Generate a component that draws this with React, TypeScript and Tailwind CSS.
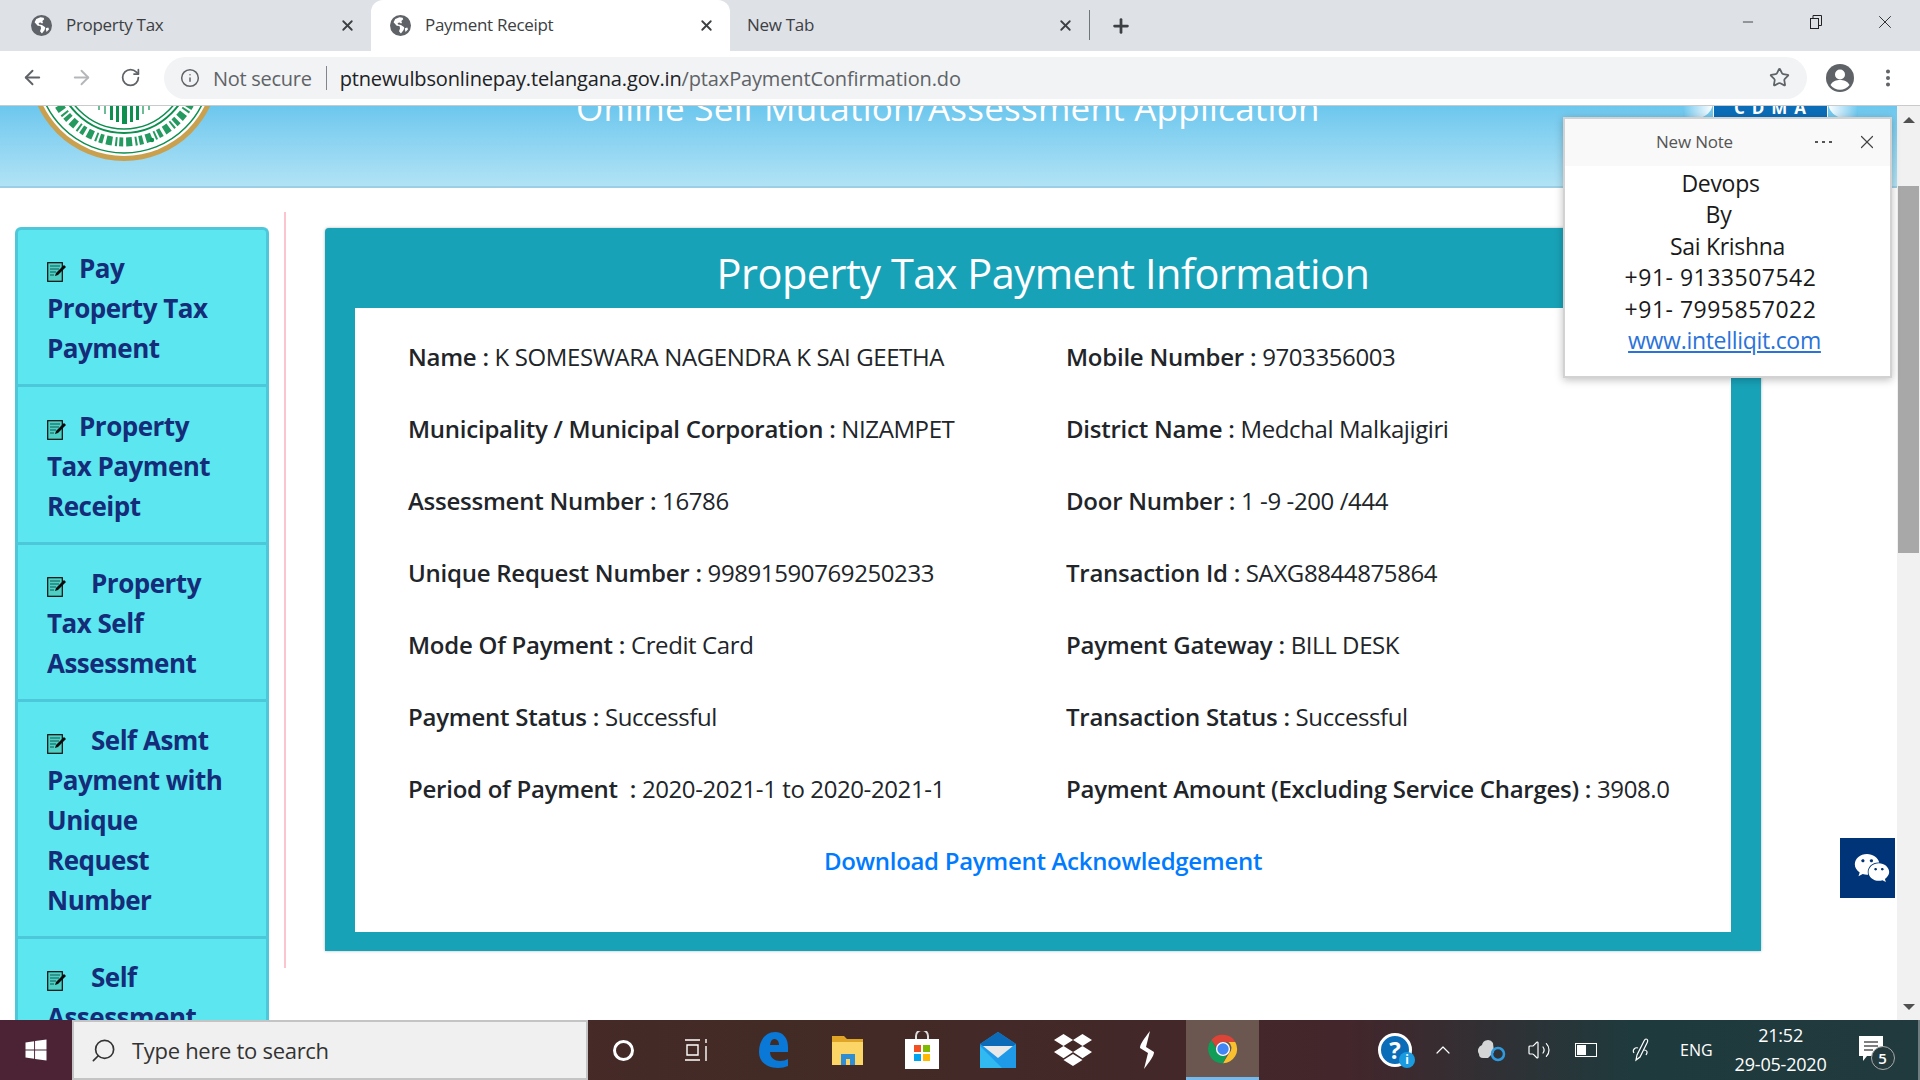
import { ArrowLeft, ArrowRight, RotateCw, Info, Star, MoreVertical, Plus, X, Minus, Search, ChevronUp, Volume2 } from "lucide-react"
import { FaDropbox, FaWindows, FaWeixin } from "react-icons/fa"

const rows: [string, string, string, string][] = [
  ["Name :", "K SOMESWARA NAGENDRA K SAI GEETHA", "Mobile Number :", "9703356003"],
  ["Municipality / Municipal Corporation :", "NIZAMPET", "District Name :", "Medchal Malkajigiri"],
  ["Assessment Number :", "16786", "Door Number :", "1 -9 -200 /444"],
  ["Unique Request Number :", "99891590769250233", "Transaction Id :", "SAXG8844875864"],
  ["Mode Of Payment :", "Credit Card", "Payment Gateway :", "BILL DESK"],
  ["Payment Status :", "Successful", "Transaction Status :", "Successful"],
  ["Period of Payment  :", "2020-2021-1 to 2020-2021-1", "Payment Amount (Excluding Service Charges) :", "3908.0"],
]

function Globe() {
  return (
    <svg width="21" height="21" viewBox="0 0 20 20" className="shrink-0">
      <circle cx="10" cy="10" r="10" fill="#5f6368" />
      <path d="M9 2.2 5 3.8 3.4 7l3 3.2 2.6.3.6 2-1 3 1.8 2.2 2.6-3.4.6-2.6-3.2-2.2-2.6-.4-.6-1.6 2-.4 1.2 1 1-.4-.6-2 1.8-1.6L12 2.6Z" fill="#fff" />
      <path d="m14 12.5 2.4-.5.8 1.6-2.4 2.6Z" fill="#fff" />
    </svg>
  )
}

function Tab({ title, active }: { title: string; active?: boolean }) {
  return (
    <div className={active ? "flex h-[51px] w-[359px] items-center rounded-t-[12px] bg-white pb-[1px] pl-[19px] pr-[15px]" : "flex h-[51px] w-[359px] items-center pb-[1px] pl-[20px] pr-[14px]"}>
      <Globe />
      <span className="ml-[14px] flex-1 text-[17px] tracking-[-0.3px] text-[#3c4043]">{title}</span>
      <X size={17} strokeWidth={2.6} className="text-[#3c4043]" />
    </div>
  )
}

function NoteIcon() {
  return (
    <svg width="20" height="21" viewBox="0 0 20 21" className="mr-[12px] inline-block align-[-4px]">
      <rect x="0.7" y="1.7" width="14.6" height="18.6" fill="#4fd0c4" stroke="#0b0b0b" strokeWidth="1.2" />
      <path d="M3 5h10M3 8h9M3 11h6M3 14h4" stroke="#0f5a55" strokeWidth="1.2" />
      <path d="m8 15 1-3 8-8 2 2-8 8Z" fill="#0b0b0b" />
    </svg>
  )
}

function MenuItem({ lines, gap, pad }: { lines: string[]; gap?: boolean; pad: string }) {
  return (
    <div className={pad}>
      <p className="text-[26px] font-bold leading-[40px] tracking-[-0.5px] text-[#152c78]">
        <NoteIcon />
        {gap && <span className="inline-block w-[12px]" />}
        {lines.map((l, i) => (
          <span key={l}>
            {i > 0 && <br />}
            {l}
          </span>
        ))}
      </p>
    </div>
  )
}

function Logo() {
  return (
    <svg width="192" height="192" viewBox="0 0 192 192" className="shrink-0">
      <circle cx="96" cy="96" r="95" fill="#c9a04e" />
      <circle cx="96" cy="96" r="90" fill="#fff" />
      <circle cx="96" cy="96" r="87" fill="none" stroke="#0c8f4f" strokeWidth="1.5" />
      <circle cx="96" cy="96" r="76" fill="none" stroke="#0c8f4f" strokeWidth="9" strokeDasharray="4 2 2 3 6 3" opacity="0.9" />
      <circle cx="96" cy="96" r="67" fill="none" stroke="#0c8f4f" strokeWidth="2" />
      <circle cx="96" cy="96" r="63" fill="none" stroke="#0c8f4f" strokeWidth="1.5" />
      <circle cx="124" cy="170" r="2.2" fill="#0c8f4f" />
      <g fill="#0c8f4f">
        <rect x="70" y="118" width="2" height="22" opacity="0.6" />
        <rect x="76" y="118" width="2" height="26" opacity="0.6" />
        <rect x="82" y="118" width="3" height="32" />
        <rect x="88" y="118" width="3" height="34" />
        <rect x="94" y="118" width="5" height="36" />
        <rect x="102" y="118" width="3" height="34" />
        <rect x="108" y="118" width="3" height="32" />
        <rect x="114" y="118" width="2" height="26" opacity="0.6" />
        <rect x="120" y="118" width="2" height="22" opacity="0.6" />
      </g>
    </svg>
  )
}

function ChromeIcon() {
  return (
    <svg width="34" height="34" viewBox="0 0 48 48">
      <path d="M24 4a20 20 0 0 1 17.3 10H24a10 10 0 0 0-9.5 7L7.6 11.4A20 20 0 0 1 24 4Z" fill="#db4437" />
      <path d="M41.3 14A20 20 0 0 1 24 44l9-14.6A10 10 0 0 0 31.5 14Z" fill="#fbc02d" />
      <path d="M24 44A20 20 0 0 1 7.6 11.4l9 15.6A10 10 0 0 0 29 33Z" fill="#0f9d58" />
      <circle cx="24" cy="24" r="10" fill="#fff" />
      <circle cx="24" cy="24" r="8" fill="#4285f4" />
    </svg>
  )
}

function App() {
  return (
    <div className="flex h-screen w-[1920px] flex-col overflow-hidden bg-white font-['Open_Sans',sans-serif]">
      {/* Tab strip */}
      <div className="flex h-[51px] shrink-0 items-center bg-[#dee1e6] pl-[11px]">
        <div className="w-[360px]"><Tab title="Property Tax" /></div>
        <Tab title="Payment Receipt" active />
        <div className="flex h-[51px] w-[375px] items-center pb-[1px] pl-[17px] pr-[15px]">
          <span className="flex-1 text-[17px] tracking-[-0.3px] text-[#3c4043]">New Tab</span>
          <X size={17} strokeWidth={2.6} className="text-[#3c4043]" />
          <div className="ml-[15px] h-[30px] w-px bg-[#70757a]" />
        </div>
        <Plus size={22} strokeWidth={3} className="ml-[5px] text-[#3c4043]" />
        <div className="ml-auto flex items-center pb-[8px] text-[#222]">
          <Minus size={16} strokeWidth={1.2} />
          <svg width="16" height="16" viewBox="0 0 16 16" fill="none" stroke="#222" className="ml-[52px]">
            <rect x="2.5" y="4.5" width="8" height="10" />
            <path d="M5 4V1.5h8.5v10H11" />
          </svg>
          <X size={22} strokeWidth={1} className="ml-[50px] mr-[24px]" />
        </div>
      </div>

      {/* Toolbar */}
      <div className="flex h-[55px] shrink-0 items-center border-b border-[#c8cacc] bg-white pb-[1px] pl-[21px]">
        <ArrowLeft size={23} strokeWidth={2} className="text-[#5f6368]" />
        <ArrowRight size={23} strokeWidth={2} className="ml-[26px] text-[#b4b7ba]" />
        <RotateCw size={21} strokeWidth={2} className="ml-[27px] text-[#5f6368]" />
        <div className="ml-[23px] flex h-[42px] w-[1643px] items-center rounded-full bg-[#f1f3f4] pl-[16px] pr-[17px]">
          <Info size={20} strokeWidth={1.8} className="text-[#5f6368]" />
          <span className="ml-[13px] pt-[2px] text-[20px] tracking-[-0.28px] text-[#5f6368]">Not secure</span>
          <div className="ml-[14px] h-[24px] w-px bg-[#80868b]" />
          <span className="ml-[13px] flex-1 pt-[2px] text-[20px] tracking-[-0.14px] text-[#202124]">
            ptnewulbsonlinepay.telangana.gov.in<span className="text-[#5f6368]">/ptaxPaymentConfirmation.do</span>
          </span>
          <Star size={21} strokeWidth={2} className="text-[#5f6368]" />
        </div>
        <svg width="28" height="28" viewBox="0 0 28 28" className="ml-[19px]">
          <circle cx="14" cy="14" r="14" fill="#5f6368" />
          <circle cx="14" cy="10.5" r="5" fill="#fff" />
          <path d="M4.5 21c2-4 6-5 9.5-5s7.500 1 9.500 5a12 12 0 0 1-19 0Z" fill="#fff" />
        </svg>
        <MoreVertical size={22} strokeWidth={2.4} className="ml-[23px] text-[#5f6368]" />
      </div>

      {/* Page */}
      <div className="relative flex min-h-0 flex-1">
        <div className="min-w-0 flex-1 overflow-hidden">
          <div className="relative flex h-[82px] overflow-hidden border-b-[2px] border-[#9ccfe3] bg-gradient-to-b from-[#6cc7ee] to-[#b1e3f5]">
            <div className="ml-[28px] mt-[-136px]"><Logo /></div>
            <h1 className="ml-[356px] mt-[-23px] whitespace-nowrap text-[35px] font-normal leading-[50px] tracking-[0.25px] text-white">
              Online Self Mutation/Assessment Application
            </h1>
            <div className="ml-auto mr-[38px] mt-[-20px] flex h-[32px] w-[178px] justify-center">
              <div className="h-[32px] w-[30px] rounded-r-full bg-gradient-to-r from-[#6cc7ee] to-white" />
              <div className="flex h-[32px] w-[115px] items-end justify-center border-x border-white bg-[#0b6db8] pl-[7px] text-[17px] font-bold tracking-[7px] text-white">
                <span className="mb-[-2px]">CDMA</span>
              </div>
              <div className="h-[32px] w-[30px] rounded-l-full bg-gradient-to-l from-[#6cc7ee] to-white" />
            </div>
          </div>

          <div className="flex items-start">
            {/* Sidebar column with pink rule */}
            <div className="mt-[24px] h-[756px] w-[286px] shrink-0 border-r-2 border-[#fbc4cf] pl-[15px] pt-[15px]">
              <div className="w-[254px] divide-y-[3px] divide-[#4cc8da] rounded-t-[6px] border-x-[3px] border-t-[3px] border-[#4cc8da] bg-[#5ce6f0]">
                <MenuItem pad="pl-[29px] pr-[10px] pb-[16px] pt-[18px]" lines={["Pay", "Property Tax", "Payment"]} />
                <MenuItem pad="pl-[29px] pr-[10px] pb-[16px] pt-[19px]" lines={["Property", "Tax Payment", "Receipt"]} />
                <MenuItem pad="pl-[29px] pr-[10px] pb-[16px] pt-[18px]" lines={["Property", "Tax Self", "Assessment"]} gap />
                <MenuItem pad="pl-[29px] pr-[10px] pb-[16px] pt-[18px]" lines={["Self Asmt", "Payment with", "Unique", "Request", "Number"]} gap />
                <MenuItem pad="pl-[29px] pr-[10px] pb-[16px] pt-[18px]" lines={["Self", "Assessment", "Payment"]} gap />
              </div>
            </div>

            {/* Main panel */}
            <div className="ml-[39px] mt-[40px] w-[1436px] rounded-t-[4px] bg-[#18a2b8] px-[30px] pb-[19px] shadow-[0_0_3px_rgba(0,0,0,0.3)]">
              <h2 className="flex h-[80px] items-center justify-center pt-[10px] text-[41.500px] font-normal tracking-[-0.5px] text-white">
                Property Tax Payment Information
              </h2>
              <div className="bg-white pb-[35px] pl-[53px] pt-[13px]">
                {rows.map(([a, b, c, d]) => (
                  <div key={a} className="flex h-[72px] items-center text-[24px] tracking-[-0.4px] text-[#212529]">
                    <div className="w-[658px] shrink-0 whitespace-pre">
                      <b className="font-semibold tracking-[-0.25px]">{a}</b> {b}
                    </div>
                    <div className="whitespace-pre">
                      <b className="font-semibold tracking-[-0.25px]">{c}</b> {d}
                    </div>
                  </div>
                ))}
                <div className="flex h-[72px] items-center justify-center pr-[53px] text-[24px] font-semibold tracking-[-0.3px] text-[#007bff]">
                  Download Payment Acknowledgement
                </div>
              </div>
            </div>
          </div>
        </div>

        {/* Scrollbar */}
        <div className="flex w-[23px] shrink-0 flex-col items-center bg-[#f1f1f1]">
          <div className="mt-[11px] h-0 w-0 border-x-[6px] border-b-[6px] border-x-transparent border-b-[#505050]" />
          <div className="mt-[63px] h-[367px] w-[21px] bg-[#a8a8a8]" />
          <div className="mt-auto mb-[10px] h-0 w-0 border-x-[6px] border-t-[6px] border-x-transparent border-t-[#505050]" />
        </div>

        {/* Sticky note window */}
        <div className="absolute left-[1563px] top-[11px] w-[329px] border-2 border-[#d2d2d2] bg-white pb-[20px] shadow-[0_2px_8px_rgba(0,0,0,0.25)]">
          <div className="flex h-[47px] items-center bg-[#f9f9f9] pb-[2px] pl-[91px] pr-[12px]">
            <span className="flex-1 text-[17px] tracking-[-0.2px] text-[#555]">New Note</span>
            <div className="mr-[24px] flex gap-[4px]">
              <i className="h-[2px] w-[3px] bg-[#555]" />
              <i className="h-[2px] w-[3px] bg-[#555]" />
              <i className="h-[2px] w-[3px] bg-[#555]" />
            </div>
            <X size={22} strokeWidth={1.3} className="text-[#444]" />
          </div>
          <div className="pr-[14px] pt-[2px] text-center text-[23px] leading-[31.4px] tracking-[-0.3px] text-[#1a1a1a]">
            <p>Devops</p>
            <p className="pr-[4px]">By</p>
            <p className="pl-[14px]">Sai Krishna</p>
            <p className="tracking-[0.5px]">+91- 9133507542</p>
            <p className="tracking-[0.5px]">+91- 7995857022</p>
            <p className="pl-[8px] text-[#2a73d9] underline">www.intelliqit.com</p>
          </div>
        </div>

        {/* Chat button */}
        <div className="absolute left-[1840px] top-[732px] flex h-[60px] w-[55px] items-center justify-center bg-[#003478] pl-[8px] text-white">
          <FaWeixin size={36} />
        </div>
      </div>

      {/* Taskbar */}
      <div className="flex h-[60px] shrink-0 items-center bg-[linear-gradient(90deg,#4a2530_0%,#432b25_40%,#43262b_70%,#1f3a3d_85%,#203a3e_100%)] text-white">
        <div className="flex h-full w-[72px] items-center justify-center bg-[#4b2335]"><FaWindows size={24} /></div>
        <div className="flex h-full w-[516px] items-center border-2 border-[#c4c4c4] bg-[#f0f0f0] pl-[16px] text-[#333]">
          <Search size={27} strokeWidth={1.5} className="-scale-x-100" />
          <span className="ml-[15px] text-[22px] tracking-[-0.3px]">Type here to search</span>
        </div>
        <div className="ml-[25px] h-[21px] w-[21px] rounded-full border-[3px] border-white" />
        <svg width="26" height="26" viewBox="0 0 26 26" fill="none" stroke="#fff" strokeWidth="1.4" className="ml-[50px]">
          <path d="M1 3h15M1 23h15M3 8h11v10H3ZM22 2v4M22 9v15" />
        </svg>
        <svg width="32" height="36" viewBox="0 0 32 36" className="ml-[47px]">
          <path fill="#0a78d7" fillRule="evenodd" d="M2 20C2 8 9 0 18 0c8 0 13 6 13 15v5H13c0 6 5 9 10 9 3 0 6-1 8-2v7c-3 1-6 2-10 2C10 36 2 30 2 20Z M13 13h9c0-4-2-6-5-6-2 0-3.500 2-4 6Z" />
        </svg>
        <svg width="34" height="34" viewBox="0 0 34 34" className="ml-[42px]">
          <path d="M1 3h12l3 3h16v26H1Z" fill="#e0a526" />
          <path d="M1 9h31v23H1Z" fill="#fbd666" />
          <path d="M10 32V21h14v11h-5v-6h-4v6Z" fill="#2f8dd3" />
        </svg>
        <svg width="34" height="38" viewBox="0 0 34 38" className="ml-[40px]">
          <path d="M11 9V5a6 6 0 0 1 12 0v4" fill="none" stroke="#ddd" strokeWidth="2" />
          <rect y="8" width="34" height="30" fill="#fff" />
          <rect x="9" y="14" width="7" height="7" fill="#f25022" />
          <rect x="18" y="14" width="7" height="7" fill="#7fba00" />
          <rect x="9" y="23" width="7" height="7" fill="#00a4ef" />
          <rect x="18" y="23" width="7" height="7" fill="#ffb900" />
        </svg>
        <svg width="36" height="36" viewBox="0 0 36 36" className="ml-[41px]">
          <path d="M0 12 18 0l18 12v24H0Z" fill="#1f9ae8" />
          <path d="M0 12 18 0l18 12-18 12Z" fill="#0b6bb8" />
          <path d="M3 14h30L18 26Z" fill="#e8e8e8" />
          <path d="M0 14 22 36H0Z" fill="#31b9f2" />
        </svg>
        <div className="ml-[38px]"><FaDropbox size={38} /></div>
        <svg width="18" height="38" viewBox="0 0 18 38" className="ml-[46px]">
          <path d="M12 0C6 8 2 13 2 17l8 5-4 16c6-8 10-13 10-17L8 16Z" fill="#fff" />
        </svg>
        <div className="relative ml-[30px] flex h-full w-[73px] items-center justify-center border-b-[3px] border-[#76b9ed] bg-[#6b574f]"><ChromeIcon /></div>
        <div className="relative ml-[119px] flex h-[34px] w-[34px] items-center justify-center rounded-full border-[3px] border-white bg-[#0b6db8] text-[24px] font-bold leading-none">
          ?
          <span className="absolute bottom-[-4px] right-[-6px] flex h-[16px] w-[16px] items-center justify-center rounded-full bg-[#1a9be0] text-[12px]">i</span>
        </div>
        <ChevronUp size={24} strokeWidth={1.2} className="ml-[19px]" />
        <svg width="28" height="24" viewBox="0 0 28 24" className="ml-[23px]">
          <path d="M1 16a6 6 0 0 1 3-9 6 6 0 0 1 11-2l1 9-6 6H5a4 4 0 0 1-4-4Z" fill="#d5d5d5" />
          <circle cx="20" cy="16" r="6" fill="none" stroke="#2e9be0" strokeWidth="2.5" />
        </svg>
        <Volume2 size={24} strokeWidth={1.2} className="ml-[21px]" />
        <div className="ml-[24px] flex h-[14px] w-[22px] border border-white p-[1px]"><div className="w-[9px] bg-white" /></div>
        <svg width="22" height="26" viewBox="0 0 22 26" fill="none" stroke="#fff" strokeWidth="1.2" className="ml-[35px]">
          <path d="M14 2c2 0 2 2 1 4L8 20l-4 3 1-5 7-14c.5-1 1-2 2-2ZM2 16c-2-3 1-6 4-5M12 13c3 0 4 2 2 5" />
        </svg>
        <span className="ml-[26px] text-[16px]">ENG</span>
        <div className="ml-[20px] flex w-[96px] flex-col items-center text-[18px] leading-[29px] tracking-[-0.2px]">
          <span>21:52</span>
          <span className="whitespace-nowrap">29-05-2020</span>
        </div>
        <div className="relative ml-[30px]">
          <svg width="24" height="28" viewBox="0 0 24 28">
            <path d="M0 0h24v20H8l-4 5v-5H0Z" fill="#fff" />
            <path d="M5 6h14M5 10h14M5 14h9" stroke="#555" strokeWidth="1.3" />
          </svg>
          <span className="absolute left-[12px] top-[10px] flex h-[24px] w-[24px] items-center justify-center rounded-full border border-[#aaa] bg-[#243a3d] text-[15px] font-semibold">5</span>
        </div>
        <div className="ml-auto h-[60px] w-[2px] bg-[#6f7c7f]" />
      </div>
    </div>
  )
}

export default App
